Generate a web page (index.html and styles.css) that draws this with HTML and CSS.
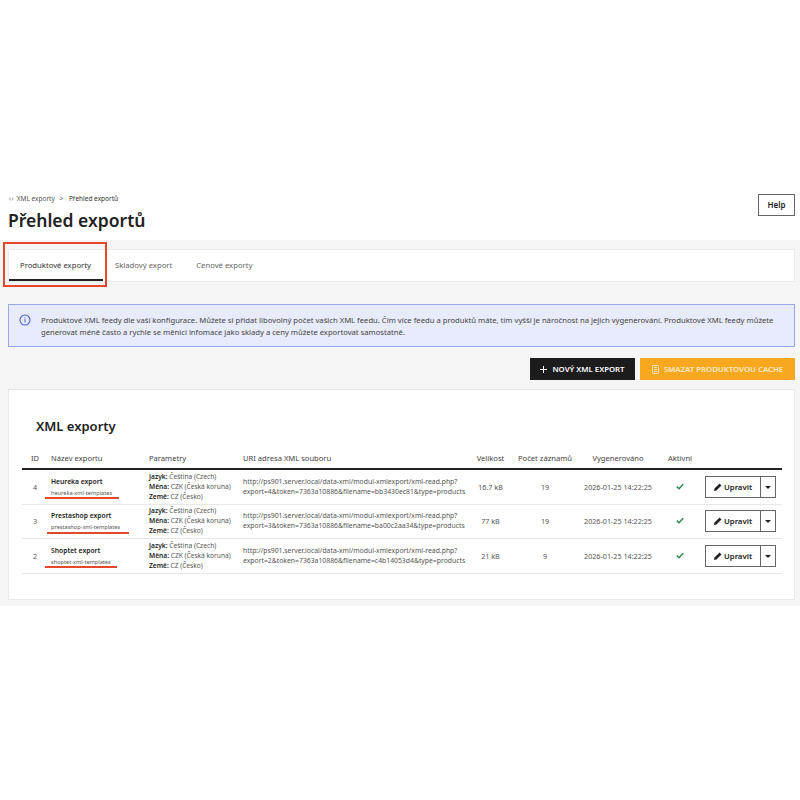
FILE: index.html
```html
<!DOCTYPE html>
<html lang="cs">
<head>
    <meta charset="UTF-8">
    <title>Přehled exportů</title>
    <link rel="stylesheet" href="styles.css">
</head>
<body>
    <div class="header">
        <div>
            <div class="breadcrumb"><span class="code">‹›</span> XML exporty <span class="sep">&gt;</span> <span class="current">Přehled exportů</span></div>
            <h1>Přehled exportů</h1>
        </div>
        <a class="help">Help</a>
    </div>

    <div class="main">
        <div class="tabs">
            <a class="tab active">Produktové exporty</a>
            <a class="tab">Skladový export</a>
            <a class="tab">Cenové exporty</a>
            <div class="red-box"></div>
        </div>

        <div class="info">
            <svg class="info-icon" width="12" height="12" viewBox="0 0 12 12"><circle cx="6" cy="6" r="5" fill="none" stroke="#4a5fd8" stroke-width="1.1"/><rect x="5.5" y="5.2" width="1" height="3.2" fill="#4a5fd8"/><rect x="5.5" y="3.4" width="1" height="1" fill="#4a5fd8"/></svg>
            <p>Produktové XML feedy dle vaší konfigurace. Můžete si přidat libovolný počet vašich XML feedu. Čím více feedu a produktů máte, tím vyšší je náročnost na jejich vygenerování. Produktové XML feedy můžete generovat méně často a rychle se měnicí infomace jako sklady a ceny můžete exportovat samostatně.</p>
        </div>

        <div class="actions">
            <a class="btn btn-dark">
                <svg width="7" height="7" viewBox="0 0 7 7"><path d="M3.5 0v7M0 3.5h7" stroke="#fff" stroke-width="1"/></svg>
                NOVÝ XML EXPORT
            </a>
            <a class="btn btn-orange">
                <svg width="7" height="9" viewBox="0 0 7 9"><path d="M.5.5h6v8h-6zM2 2.5h3M2 4.5h3M2 6.5h3" fill="none" stroke="#fbe3b4" stroke-width="1"/></svg>
                SMAZAT PRODUKTOVOU CACHE
            </a>
        </div>

        <div class="card">
            <h2>XML exporty</h2>
            <table>
                <colgroup>
                    <col class="c-id"><col class="c-name"><col class="c-param"><col class="c-uri"><col class="c-size"><col class="c-count"><col class="c-date"><col class="c-active"><col>
                </colgroup>
                <thead>
                    <tr>
                        <th class="center id">ID</th>
                        <th>Název exportu</th>
                        <th>Parametry</th>
                        <th>URI adresa XML souboru</th>
                        <th class="center">Velikost</th>
                        <th class="center">Počet záznamů</th>
                        <th class="center">Vygenerováno</th>
                        <th class="center">Aktivní</th>
                        <th></th>
                    </tr>
                </thead>
                <tbody>
                    <tr>
                        <td class="center id">4</td>
                        <td class="name"><b>Heureka export</b><small>heureka-xml-templates</small><i class="mark m1"></i></td>
                        <td class="params"><b>Jazyk:</b> Čeština (Czech)<br><b>Měna:</b> CZK (Česká koruna)<br><b>Země:</b> CZ (Česko)</td>
                        <td class="uri">http://ps901.server.local/data-xml/modul-xmlexport/xml-read.php?<br>export=4&amp;token=7363a10886&amp;filename=bb3430ec81&amp;type=products</td>
                        <td class="center">16.7 kB</td>
                        <td class="center">19</td>
                        <td class="center">2026-01-25 14:22:25</td>
                        <td class="center"><svg width="8" height="7" viewBox="0 0 10 8"><path d="M1 4.2l2.8 2.6L9 1.2" fill="none" stroke="#2e8b57" stroke-width="2"/></svg></td>
                        <td><div class="edit"><a class="edit-main"><svg width="8" height="8" viewBox="0 0 8 8"><path d="M0 8l.5-2.4L5.6.5l1.9 1.9L2.4 7.5z" fill="#222"/></svg> Upravit</a><a class="edit-caret"></a></div></td>
                    </tr>
                    <tr>
                        <td class="center id">3</td>
                        <td class="name"><b>Prestashop export</b><small>prestashop-xml-templates</small><i class="mark m2"></i></td>
                        <td class="params"><b>Jazyk:</b> Čeština (Czech)<br><b>Měna:</b> CZK (Česká koruna)<br><b>Země:</b> CZ (Česko)</td>
                        <td class="uri">http://ps901.server.local/data-xml/modul-xmlexport/xml-read.php?<br>export=3&amp;token=7363a10886&amp;filename=ba00c2aa34&amp;type=products</td>
                        <td class="center">77 kB</td>
                        <td class="center">19</td>
                        <td class="center">2026-01-25 14:22:25</td>
                        <td class="center"><svg width="8" height="7" viewBox="0 0 10 8"><path d="M1 4.2l2.8 2.6L9 1.2" fill="none" stroke="#2e8b57" stroke-width="2"/></svg></td>
                        <td><div class="edit"><a class="edit-main"><svg width="8" height="8" viewBox="0 0 8 8"><path d="M0 8l.5-2.4L5.6.5l1.9 1.9L2.4 7.5z" fill="#222"/></svg> Upravit</a><a class="edit-caret"></a></div></td>
                    </tr>
                    <tr>
                        <td class="center id">2</td>
                        <td class="name"><b>Shoptet export</b><small>shoptet-xml-templates</small><i class="mark m3"></i></td>
                        <td class="params"><b>Jazyk:</b> Čeština (Czech)<br><b>Měna:</b> CZK (Česká koruna)<br><b>Země:</b> CZ (Česko)</td>
                        <td class="uri">http://ps901.server.local/data-xml/modul-xmlexport/xml-read.php?<br>export=2&amp;token=7363a10886&amp;filename=c4b14053d4&amp;type=products</td>
                        <td class="center">21 kB</td>
                        <td class="center">9</td>
                        <td class="center">2026-01-25 14:22:25</td>
                        <td class="center"><svg width="8" height="7" viewBox="0 0 10 8"><path d="M1 4.2l2.8 2.6L9 1.2" fill="none" stroke="#2e8b57" stroke-width="2"/></svg></td>
                        <td><div class="edit"><a class="edit-main"><svg width="8" height="8" viewBox="0 0 8 8"><path d="M0 8l.5-2.4L5.6.5l1.9 1.9L2.4 7.5z" fill="#222"/></svg> Upravit</a><a class="edit-caret"></a></div></td>
                    </tr>
                </tbody>
            </table>
        </div>
    </div>
</body>
</html>
```

FILE: styles.css
```css
body {
    font-family: "Noto Sans", Arial, sans-serif;
    margin: 0;
    background-color: #fff;
    color: #333;
}
.header {
    display: flex;
    justify-content: space-between;
    height: 46px;
    padding: 194px 5px 0 8px;
}
.breadcrumb {
    font-size: 6.5px;
    line-height: 10px;
    color: #555;
}
.breadcrumb .code {
    margin: 0 1px 0 1px;
    letter-spacing: 0.5px;
}
.breadcrumb .sep {
    margin: 0 4px 0 3px;
}
.breadcrumb .current {
    color: #333;
}
h1 {
    margin: 5px 0 0;
    font-size: 17.5px;
    line-height: 22px;
    font-weight: 600;
    color: #222;
}
.help {
    box-sizing: border-box;
    width: 37px;
    height: 22px;
    border: 1px solid #666;
    font-size: 8px;
    font-weight: 600;
    line-height: 20px;
    text-align: center;
    color: #222;
}
.main {
    height: 357px;
    padding: 9px 5px 0 8px;
    background-color: #f5f5f5;
}
.tabs {
    position: relative;
    display: flex;
    box-sizing: border-box;
    height: 33px;
    background: #fff;
    border: 1px solid #eaeaea;
}
.tab {
    padding: 0 12px;
    font-size: 7.7px;
    line-height: 30px;
    color: #666;
    white-space: nowrap;
}
.tab.active {
    box-sizing: border-box;
    width: 94px;
    height: 31px;
    padding: 0 11px;
    color: #333;
    border-bottom: 2px solid #222;
}
.red-box {
    position: absolute;
    left: -6px;
    top: -8px;
    width: 100px;
    height: 41px;
    border: 2px solid #e5472b;
}
.info {
    display: flex;
    gap: 10px;
    box-sizing: border-box;
    height: 43px;
    margin-top: 22px;
    padding: 9px 20px 0 10px;
    background: #e7ebfb;
    border: 1px solid #9aa8e8;
}
.info-icon {
    flex: none;
}
.info p {
    margin: 0;
    font-size: 7.66px;
    line-height: 12px;
    color: #444;
}
.actions {
    display: flex;
    justify-content: flex-end;
    gap: 5px;
    margin-top: 11px;
}
.btn {
    display: flex;
    align-items: center;
    justify-content: center;
    gap: 5px;
    height: 22px;
    font-size: 7.8px;
    font-weight: 600;
    color: #fff;
    white-space: nowrap;
}
.btn-dark {
    width: 105px;
    background: #1c1c1c;
}
.btn-orange {
    width: 155px;
    background: #f7a81e;
    color: #fdeccb;
}
.card {
    box-sizing: border-box;
    height: 211px;
    margin-top: 9px;
    padding: 26px 14px 0 13px;
    background: #fff;
    border: 1px solid #e8e8e8;
}
h2 {
    margin: 0 0 11px 14px;
    font-size: 13px;
    line-height: 20px;
    font-weight: 600;
    color: #222;
}
table {
    width: 760px;
    table-layout: fixed;
    border-collapse: collapse;
    font-size: 7.2px;
    line-height: 10px;
    color: #555;
}
.c-id { width: 22px; }
.c-name { width: 98px; }
.c-param { width: 94px; }
.c-uri { width: 234px; }
.c-size { width: 41px; }
.c-count { width: 68px; }
.c-date { width: 78px; }
.c-active { width: 46px; }
th {
    height: 21px;
    padding: 0 7px;
    text-align: left;
    font-weight: 400;
    font-size: 7.6px;
    color: #444;
    white-space: nowrap;
    border-bottom: 2px solid #222;
}
td {
    height: 33.6px;
    padding: 0 7px;
    border-bottom: 1px solid #e8e8e8;
    white-space: nowrap;
}
th.center, td.center {
    padding: 0;
    text-align: center;
}
th.id, td.id {
    padding-left: 4px;
}
.name {
    position: relative;
    font-size: 6.75px;
    color: #222;
}
.name b {
    display: block;
    font-weight: 600;
    line-height: 11px;
}
.name small {
    display: block;
    margin-top: 1px;
    font-size: 5.6px;
    line-height: 10px;
    color: #555;
}
.mark {
    position: absolute;
    top: 27px;
    height: 2px;
    background: #e5472b;
}
.m1 { left: 1px; width: 74px; }
.m2 { left: 3px; width: 82px; }
.m3 { left: 1px; width: 72px; }
.params {
    font-size: 6.63px;
}
.params b {
    font-weight: 600;
    color: #222;
}
.uri {
    font-size: 6.83px;
}
.edit {
    display: flex;
    box-sizing: border-box;
    width: 71px;
    height: 22px;
    margin-left: -5px;
    border: 1px solid #666;
}
.edit-main {
    display: flex;
    align-items: center;
    justify-content: center;
    gap: 2px;
    flex: 1;
    font-size: 7.8px;
    font-weight: 600;
    color: #222;
    border-right: 1px solid #666;
}
.edit-caret {
    position: relative;
    width: 14px;
}
.edit-caret::after {
    content: "";
    position: absolute;
    left: 4px;
    top: 9px;
    border: 3px solid transparent;
    border-top-color: #222;
    border-bottom: 0;
}
```
